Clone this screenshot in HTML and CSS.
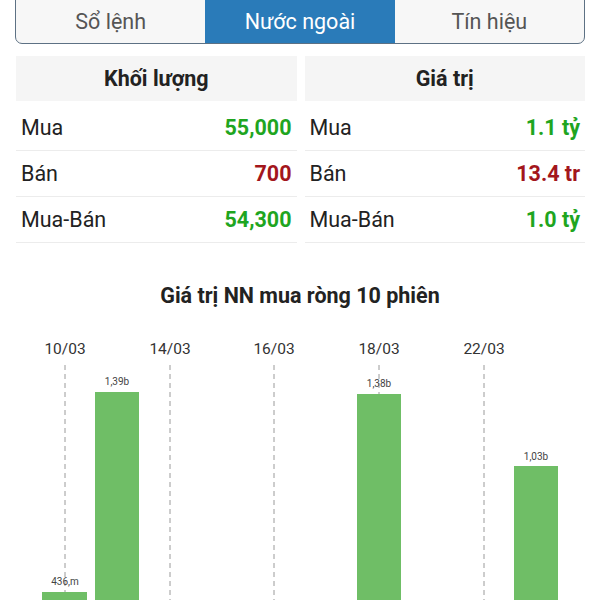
FILE: index.html
```html
<!DOCTYPE html>
<html lang="vi">
<head>
  <meta charset="UTF-8">
  <title>Nước ngoài</title>
  <link rel="stylesheet" href="styles.css">
</head>
<body>

<div class="tabs">
  <div class="tab">Sổ lệnh</div>
  <div class="tab active">Nước ngoài</div>
  <div class="tab">Tín hiệu</div>
</div>

<div class="bang">
  <div class="cot">
    <div class="tieude">Khối lượng</div>
    <div class="dong"><span>Mua</span><b class="xanh">55,000</b></div>
    <div class="dong"><span>Bán</span><b class="do">700</b></div>
    <div class="dong"><span>Mua-Bán</span><b class="xanh">54,300</b></div>
  </div>
  <div class="cot">
    <div class="tieude">Giá trị</div>
    <div class="dong"><span>Mua</span><b class="xanh">1.1 tỷ</b></div>
    <div class="dong"><span>Bán</span><b class="do">13.4 tr</b></div>
    <div class="dong"><span>Mua-Bán</span><b class="xanh">1.0 tỷ</b></div>
  </div>
</div>

<h2 class="bieudo-ten">Giá trị NN mua ròng 10 phiên</h2>

<svg class="bieudo" width="600" height="290" viewBox="0 0 600 290">
  <g class="ngay">
    <text x="65" y="34">10/03</text>
    <text x="170" y="34">14/03</text>
    <text x="274" y="34">16/03</text>
    <text x="379" y="34">18/03</text>
    <text x="484" y="34">22/03</text>
  </g>
  <g class="luoi">
    <line x1="65" y1="45" x2="65" y2="290"/>
    <line x1="170" y1="45" x2="170" y2="290"/>
    <line x1="274" y1="45" x2="274" y2="290"/>
    <line x1="379" y1="45" x2="379" y2="290"/>
    <line x1="484" y1="45" x2="484" y2="290"/>
  </g>
  <g class="cotbd">
    <rect x="42" y="272" width="45" height="30"/>
    <rect x="95" y="72" width="44" height="230"/>
    <rect x="357" y="74" width="44" height="230"/>
    <rect x="514" y="146" width="44" height="160"/>
  </g>
  <g class="giatri">
    <text x="65" y="265">436,m</text>
    <text x="117" y="65">1,39b</text>
    <text x="379" y="67">1,38b</text>
    <text x="536" y="140">1,03b</text>
  </g>
</svg>

</body>
</html>
```

FILE: styles.css
```css
body {
  margin: 0;
  font-family: Roboto, 'Noto Sans', sans-serif;
  background: white;
  color: #222;
  overflow: hidden;
}

.tabs {
  display: flex;
  margin: -6px 15px 0;
  height: 48px;
  border: 1px solid #5d7184;
  border-radius: 0 0 7px 7px;
  overflow: hidden;
  background: #f7f7f7;
}

.tab {
  flex: 1;
  display: flex;
  align-items: center;
  justify-content: center;
  padding-top: 4px;
  font-size: 21.5px;
  color: #555;
}

.tab.active {
  background: #2a7bb9;
  color: white;
}

.bang {
  display: grid;
  grid-template-columns: 1fr 1fr;
  gap: 8px;
  margin: 12px 15px 0 16px;
}

.tieude {
  height: 45px;
  background: #f5f5f5;
  display: flex;
  align-items: center;
  justify-content: center;
  font-size: 21.5px;
  font-weight: bold;
  margin-bottom: 4px;
}

.dong {
  height: 46px;
  border-bottom: 1px solid #ececec;
  display: flex;
  align-items: center;
  justify-content: space-between;
  padding: 0 5px;
  font-size: 21.5px;
  box-sizing: border-box;
}

.dong b {
  font-size: 21.5px;
}

.xanh { color: #1fa51f; }
.do { color: #a3161c; }

.bieudo-ten {
  margin: 41px 0 0;
  text-align: center;
  font-size: 21.5px;
  font-weight: bold;
  line-height: 24px;
}

.bieudo {
  display: block;
  margin-top: 12px;
}

.ngay text {
  font-size: 15.5px;
  fill: #333;
  text-anchor: middle;
}

.luoi line {
  stroke: #9a9a9a;
  stroke-width: 1;
  stroke-dasharray: 5 4;
}

.cotbd rect {
  fill: #6fbe66;
}

.giatri text {
  font-size: 10px;
  fill: #444;
  text-anchor: middle;
}
```
